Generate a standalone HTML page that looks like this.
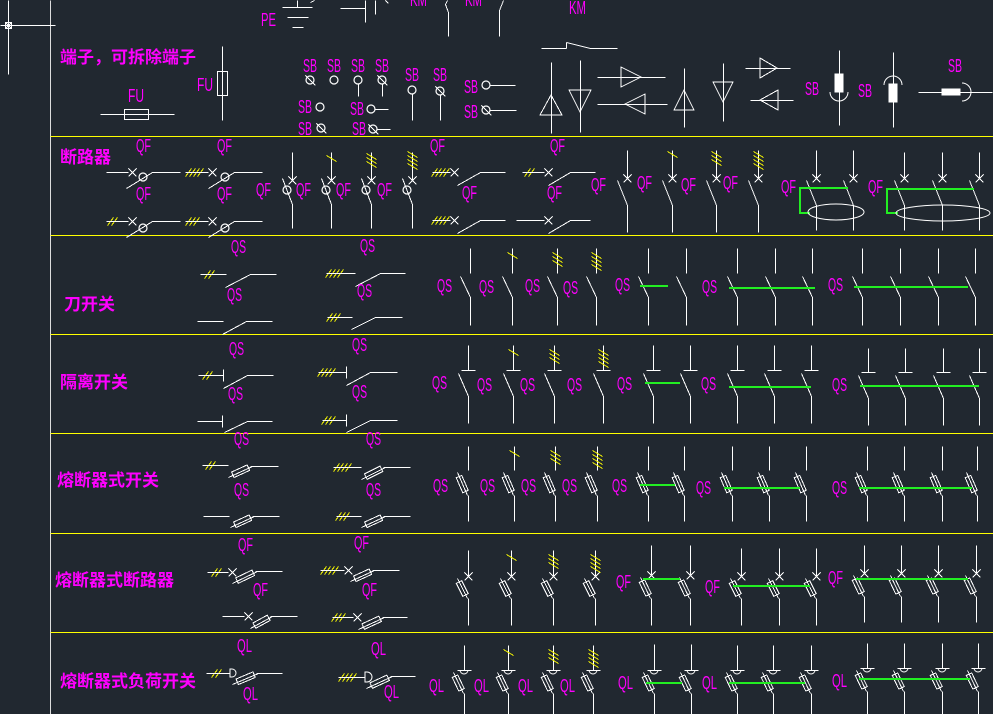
<!DOCTYPE html>
<html><head><meta charset="utf-8">
<style>
html,body{margin:0;padding:0;background:#212830;}
svg{display:block}
.m{fill:#ff00ff;font-family:"Liberation Sans Narrow","Liberation Sans",sans-serif;font-size:18px;}
.c{fill:#ff00ff;font-family:"Liberation Sans","Noto Sans CJK SC",sans-serif;font-size:17px;font-weight:bold;}
</style></head>
<body>
<svg id="s" width="993" height="714" viewBox="0 0 993 714" xmlns="http://www.w3.org/2000/svg">
<rect width="993" height="714" fill="#212830"/>
<g id="g" stroke="#fff" stroke-width="1" fill="none" shape-rendering="crispEdges"></g>
<g>
<text class="c" x="60" y="63">端子，可拆除端子</text>
<text class="c" x="60" y="163">断路器</text>
<text class="c" x="64" y="310">刀开关</text>
<text class="c" x="60" y="388">隔离开关</text>
<text class="c" x="57" y="486">熔断器式开关</text>
<text class="c" x="55" y="586">熔断器式断路器</text>
<text class="c" x="60" y="687">熔断器式负荷开关</text>

<text class="m" x="261" y="26" textLength="15" lengthAdjust="spacingAndGlyphs">PE</text>
<text class="m" x="410" y="6" textLength="17" lengthAdjust="spacingAndGlyphs">KM</text>
<text class="m" x="465" y="6" textLength="17" lengthAdjust="spacingAndGlyphs">KM</text>
<text class="m" x="569" y="14" textLength="17" lengthAdjust="spacingAndGlyphs">KM</text>
<text class="m" x="128" y="102" textLength="16" lengthAdjust="spacingAndGlyphs">FU</text>
<text class="m" x="197" y="91" textLength="16" lengthAdjust="spacingAndGlyphs">FU</text>

<text class="m" x="303" y="72" textLength="14" lengthAdjust="spacingAndGlyphs">SB</text>
<text class="m" x="327" y="72" textLength="14" lengthAdjust="spacingAndGlyphs">SB</text>
<text class="m" x="351" y="72" textLength="14" lengthAdjust="spacingAndGlyphs">SB</text>
<text class="m" x="375" y="72" textLength="14" lengthAdjust="spacingAndGlyphs">SB</text>
<text class="m" x="405" y="81" textLength="14" lengthAdjust="spacingAndGlyphs">SB</text>
<text class="m" x="433" y="81" textLength="14" lengthAdjust="spacingAndGlyphs">SB</text>
<text class="m" x="298" y="113" textLength="14" lengthAdjust="spacingAndGlyphs">SB</text>
<text class="m" x="350" y="115" textLength="14" lengthAdjust="spacingAndGlyphs">SB</text>
<text class="m" x="298" y="135" textLength="14" lengthAdjust="spacingAndGlyphs">SB</text>
<text class="m" x="352" y="135" textLength="14" lengthAdjust="spacingAndGlyphs">SB</text>
<text class="m" x="464" y="93" textLength="14" lengthAdjust="spacingAndGlyphs">SB</text>
<text class="m" x="464" y="118" textLength="14" lengthAdjust="spacingAndGlyphs">SB</text>
<text class="m" x="805" y="95" textLength="14" lengthAdjust="spacingAndGlyphs">SB</text>
<text class="m" x="858" y="97" textLength="14" lengthAdjust="spacingAndGlyphs">SB</text>
<text class="m" x="948" y="72" textLength="14" lengthAdjust="spacingAndGlyphs">SB</text>

<text class="m" x="136" y="152" textLength="15" lengthAdjust="spacingAndGlyphs">QF</text>
<text class="m" x="136" y="200" textLength="15" lengthAdjust="spacingAndGlyphs">QF</text>
<text class="m" x="217" y="152" textLength="15" lengthAdjust="spacingAndGlyphs">QF</text>
<text class="m" x="217" y="200" textLength="15" lengthAdjust="spacingAndGlyphs">QF</text>
<text class="m" x="256" y="196" textLength="15" lengthAdjust="spacingAndGlyphs">QF</text>
<text class="m" x="296" y="196" textLength="15" lengthAdjust="spacingAndGlyphs">QF</text>
<text class="m" x="336" y="196" textLength="15" lengthAdjust="spacingAndGlyphs">QF</text>
<text class="m" x="377" y="196" textLength="15" lengthAdjust="spacingAndGlyphs">QF</text>
<text class="m" x="430" y="152" textLength="15" lengthAdjust="spacingAndGlyphs">QF</text>
<text class="m" x="462" y="199" textLength="15" lengthAdjust="spacingAndGlyphs">QF</text>
<text class="m" x="550" y="152" textLength="15" lengthAdjust="spacingAndGlyphs">QF</text>
<text class="m" x="547" y="199" textLength="15" lengthAdjust="spacingAndGlyphs">QF</text>
<text class="m" x="591" y="191" textLength="15" lengthAdjust="spacingAndGlyphs">QF</text>
<text class="m" x="637" y="189" textLength="15" lengthAdjust="spacingAndGlyphs">QF</text>
<text class="m" x="681" y="191" textLength="15" lengthAdjust="spacingAndGlyphs">QF</text>
<text class="m" x="723" y="189" textLength="15" lengthAdjust="spacingAndGlyphs">QF</text>
<text class="m" x="781" y="193" textLength="15" lengthAdjust="spacingAndGlyphs">QF</text>
<text class="m" x="868" y="193" textLength="15" lengthAdjust="spacingAndGlyphs">QF</text>

<text class="m" x="231" y="253" textLength="15" lengthAdjust="spacingAndGlyphs">QS</text>
<text class="m" x="227" y="301" textLength="15" lengthAdjust="spacingAndGlyphs">QS</text>
<text class="m" x="360" y="252" textLength="15" lengthAdjust="spacingAndGlyphs">QS</text>
<text class="m" x="357" y="297" textLength="15" lengthAdjust="spacingAndGlyphs">QS</text>
<text class="m" x="437" y="292" textLength="15" lengthAdjust="spacingAndGlyphs">QS</text>
<text class="m" x="479" y="293" textLength="15" lengthAdjust="spacingAndGlyphs">QS</text>
<text class="m" x="525" y="292" textLength="15" lengthAdjust="spacingAndGlyphs">QS</text>
<text class="m" x="563" y="294" textLength="15" lengthAdjust="spacingAndGlyphs">QS</text>
<text class="m" x="615" y="291" textLength="15" lengthAdjust="spacingAndGlyphs">QS</text>
<text class="m" x="702" y="293" textLength="15" lengthAdjust="spacingAndGlyphs">QS</text>
<text class="m" x="828" y="291" textLength="15" lengthAdjust="spacingAndGlyphs">QS</text>

<text class="m" x="229" y="355" textLength="15" lengthAdjust="spacingAndGlyphs">QS</text>
<text class="m" x="228" y="400" textLength="15" lengthAdjust="spacingAndGlyphs">QS</text>
<text class="m" x="352" y="351" textLength="15" lengthAdjust="spacingAndGlyphs">QS</text>
<text class="m" x="352" y="398" textLength="15" lengthAdjust="spacingAndGlyphs">QS</text>
<text class="m" x="432" y="389" textLength="15" lengthAdjust="spacingAndGlyphs">QS</text>
<text class="m" x="477" y="391" textLength="15" lengthAdjust="spacingAndGlyphs">QS</text>
<text class="m" x="520" y="391" textLength="15" lengthAdjust="spacingAndGlyphs">QS</text>
<text class="m" x="567" y="391" textLength="15" lengthAdjust="spacingAndGlyphs">QS</text>
<text class="m" x="617" y="390" textLength="15" lengthAdjust="spacingAndGlyphs">QS</text>
<text class="m" x="701" y="390" textLength="15" lengthAdjust="spacingAndGlyphs">QS</text>
<text class="m" x="832" y="391" textLength="15" lengthAdjust="spacingAndGlyphs">QS</text>

<text class="m" x="234" y="445" textLength="15" lengthAdjust="spacingAndGlyphs">QS</text>
<text class="m" x="234" y="496" textLength="15" lengthAdjust="spacingAndGlyphs">QS</text>
<text class="m" x="366" y="445" textLength="15" lengthAdjust="spacingAndGlyphs">QS</text>
<text class="m" x="366" y="496" textLength="15" lengthAdjust="spacingAndGlyphs">QS</text>
<text class="m" x="433" y="492" textLength="15" lengthAdjust="spacingAndGlyphs">QS</text>
<text class="m" x="480" y="492" textLength="15" lengthAdjust="spacingAndGlyphs">QS</text>
<text class="m" x="521" y="492" textLength="15" lengthAdjust="spacingAndGlyphs">QS</text>
<text class="m" x="562" y="492" textLength="15" lengthAdjust="spacingAndGlyphs">QS</text>
<text class="m" x="612" y="492" textLength="15" lengthAdjust="spacingAndGlyphs">QS</text>
<text class="m" x="696" y="494" textLength="15" lengthAdjust="spacingAndGlyphs">QS</text>
<text class="m" x="832" y="494" textLength="15" lengthAdjust="spacingAndGlyphs">QS</text>

<text class="m" x="238" y="551" textLength="15" lengthAdjust="spacingAndGlyphs">QF</text>
<text class="m" x="253" y="596" textLength="15" lengthAdjust="spacingAndGlyphs">QF</text>
<text class="m" x="354" y="549" textLength="15" lengthAdjust="spacingAndGlyphs">QF</text>
<text class="m" x="362" y="596" textLength="15" lengthAdjust="spacingAndGlyphs">QF</text>
<text class="m" x="616" y="588" textLength="15" lengthAdjust="spacingAndGlyphs">QF</text>
<text class="m" x="705" y="593" textLength="15" lengthAdjust="spacingAndGlyphs">QF</text>
<text class="m" x="828" y="584" textLength="15" lengthAdjust="spacingAndGlyphs">QF</text>

<text class="m" x="237" y="652" textLength="15" lengthAdjust="spacingAndGlyphs">QL</text>
<text class="m" x="243" y="700" textLength="15" lengthAdjust="spacingAndGlyphs">QL</text>
<text class="m" x="371" y="655" textLength="15" lengthAdjust="spacingAndGlyphs">QL</text>
<text class="m" x="384" y="698" textLength="15" lengthAdjust="spacingAndGlyphs">QL</text>
<text class="m" x="429" y="692" textLength="15" lengthAdjust="spacingAndGlyphs">QL</text>
<text class="m" x="474" y="692" textLength="15" lengthAdjust="spacingAndGlyphs">QL</text>
<text class="m" x="518" y="692" textLength="15" lengthAdjust="spacingAndGlyphs">QL</text>
<text class="m" x="560" y="692" textLength="15" lengthAdjust="spacingAndGlyphs">QL</text>
<text class="m" x="618" y="689" textLength="15" lengthAdjust="spacingAndGlyphs">QL</text>
<text class="m" x="702" y="689" textLength="15" lengthAdjust="spacingAndGlyphs">QL</text>
<text class="m" x="832" y="687" textLength="15" lengthAdjust="spacingAndGlyphs">QL</text>
</g>
</svg>
<script>
var G=document.getElementById('g'),NS='http://www.w3.org/2000/svg';
function el(t,a){var e=document.createElementNS(NS,t);for(var k in a)e.setAttribute(k,a[k]);G.appendChild(e);return e;}
var W='#ffffff',Y='#ffff00',GR='#22ee22';
function L(x1,y1,x2,y2,c,w){el('line',{x1:x1+0.5,y1:y1+0.5,x2:x2+0.5,y2:y2+0.5,stroke:c||W,'stroke-width':w||1});}
function GL(x1,y,x2){el('rect',{x:x1,y:y,width:x2-x1,height:2,fill:GR,stroke:'none'});}
function C(x,y,r,slash){el('circle',{cx:x,cy:y,r:r,'shape-rendering':'auto','stroke-width':1.2});if(slash)L(x-r-1,y-r-1,x+r+1,y+r+1);}
function X(x,y){L(x-4,y-4,x+4,y+4);L(x-4,y+4,x+4,y-4);}
function vmarks(c,y,n){for(var i=0;i<n;i++){var yy=y+i*4;L(c-5,yy-3,c+5,yy+3,Y);}}
function hmarks(x,y,n){for(var i=0;i<n;i++){var xx=x+i*4;L(xx-3,y+4,xx+3,y-4,Y);}}
function fuse(x1,y1,x2,y2){L(x1,y1,x2,y2);var dx=x2-x1,dy=y2-y1,l=Math.sqrt(dx*dx+dy*dy),ux=dx/l,uy=dy/l,px=-uy*3,py=ux*3;
 var a=0.2,b=0.85,ax=x1+dx*a,ay=y1+dy*a,bx=x1+dx*b,by=y1+dy*b;
 el('polygon',{points:[ax+px,ay+py,bx+px,by+py,bx-px,by-py,ax-px,ay-py].join(' ')});}
// frame
L(50,0,50,714,'#dddddd',1);
[136,235,334,433,533,632].forEach(function(y){L(50,y,993,y,Y,1);});
L(0,25,55,25,W,1);L(8,0,8,74,W,1);el('rect',{x:5.5,y:22.5,width:6,height:6,'stroke-width':1});L(5,22,11,28,W,1);L(5,28,11,22,W,1);
// row0 top partial
L(297,0,297,7);L(282,7,312,7);L(287,17,308,17);L(292,27,303,27);
L(314,0,310,2);
L(340,8,365,8);L(365,0,365,22);L(375,0,375,14);
L(385,0,388,3);
L(447,0,445,4);L(445,4,448,12);L(448,12,448,36);
L(503,0,499,10);L(499,10,499,36);
L(541,48,566,48);L(566,42,566,48);L(566,42,590,48);L(590,48,617,48);
// FU
L(100,114,174,114);el('rect',{x:124.5,y:109.5,width:24,height:10});
L(222,46,222,120);el('rect',{x:217.5,y:71.5,width:10,height:24});
// SB stuff
C(310,80,4,1);C(334,80,4);C(358,80,4);C(382,80,4,1);L(358,84,358,96);L(382,84,382,96);
C(412,90,4);L(412,94,412,120);C(440,91,4,1);L(440,95,440,120);
C(320,107,4);C(371,109,4);L(375,109,388,109);C(321,128,4,1);C(373,129,4,1);L(377,129,390,129);
C(486,85,4);L(490,85,515,85);C(486,110,4,1);L(490,110,516,110);
// diodes
L(551,62,551,133);el('polygon',{points:'551,95 540,115 562,115'});
L(580,60,580,132);el('polygon',{points:'569,90 591,90 580,112'});
L(597,77,665,77);el('polygon',{points:'621,67 621,87 641,77'});
L(597,104,667,104);el('polygon',{points:'645,94 645,114 625,104'});
L(684,68,684,127);el('polygon',{points:'684,90 674,110 694,110'});
L(723,63,723,121);el('polygon',{points:'713,82 733,82 723,102'});
L(745,68,790,68);el('polygon',{points:'760,58 760,78 777,68'});
L(750,100,793,100);el('polygon',{points:'778,90 778,110 760,100'});
// SB buttons
L(839,50,839,125);el('rect',{x:835,y:74,width:8,height:18,fill:W});el('path',{d:'M830 92 A9 9 0 0 0 848 92','shape-rendering':'auto'});
L(893,52,893,127);el('rect',{x:889,y:84,width:8,height:18,fill:W});el('path',{d:'M884 85 A9 9 0 0 1 902 85','shape-rendering':'auto'});
L(918,92,992,92);el('rect',{x:942,y:89,width:18,height:6,fill:W});el('path',{d:'M962 83 A9 9 0 0 1 962 101','shape-rendering':'auto'});
// breakers left
L(106,172,128,172);X(132,172);L(126,188,152,172);C(143,177,4);L(152,172,180,172);
hmarks(188,172,4);L(185,172,208,172);X(212,172);L(208,188,234,172);C(225,177,4);L(234,172,262,172);
hmarks(110,221,2);L(106,221,128,221);X(132,221);L(126,237,152,221);C(143,228,4);L(152,221,180,221);
hmarks(188,221,3);L(185,221,208,221);X(212,221);L(208,237,234,221);C(225,228,4);L(234,221,262,221);
[[292,0],[331,1],[371,2],[412,3]].forEach(function(a){var c=a[0];L(c,152,c,180);X(c,180);L(c-10,178,c,204);C(c-5,190,4);L(c,204,c,228);if(a[1])vmarks(c,158-(a[1]-1)*2,a[1]+(a[1]>1?1:0));});
hmarks(434,172,4);L(432,172,450,172);X(454,172);L(457,185,480,172);L(480,172,505,172);
hmarks(434,220,4);L(432,220,450,220);X(454,220);L(457,233,480,220);L(480,220,505,220);
hmarks(527,172,2);L(522,172,544,172);X(548,172);L(548,185,570,172);L(570,172,595,172);
L(516,220,544,220);X(548,220);L(548,233,570,220);L(570,220,590,220);
[[627,0],[672,1],[716,2],[758,3]].forEach(function(a){var c=a[0];L(c,150,c,178);X(c,178);L(c-10,180,c,205);L(c,205,c,232);if(a[1])vmarks(c,154,a[1]+(a[1]>1?1:0));});
[816,853].forEach(function(c){L(c,150,c,178);X(c,178);L(c-10,180,c,205);L(c,205,c,230);});
GL(799,187,848);el('rect',{x:799,y:187,width:2,height:27,fill:GR,stroke:'none'});GL(799,212,810);el('ellipse',{cx:836,cy:212,rx:28,ry:8,'shape-rendering':'auto'});
[904,942,979].forEach(function(c){L(c,152,c,178);X(c,178);L(c-10,180,c,205);L(c,205,c,230);});
GL(886,188,974);el('rect',{x:886,y:188,width:2,height:26,fill:GR,stroke:'none'});GL(886,212,898);el('ellipse',{cx:943,cy:213,rx:47,ry:8,'shape-rendering':'auto'});
// knife switch row
hmarks(207,274,2);L(200,274,226,274);L(225,287,250,274);L(250,274,276,274);
L(197,321,223,321);L(222,334,246,321);L(246,321,272,321);
hmarks(328,273,4);L(326,273,355,273);L(355,286,380,273);L(380,273,405,273);
hmarks(329,317,3);L(327,317,352,317);L(351,329,375,317);L(375,317,402,317);
function vrow(cols,marks,t,yt,yb,yc,ye,kind){cols.forEach(function(c,i){
 L(c,yt,c,yb);
 if(kind=='tick')L(c-7,yb,c+7,yb);
 if(kind=='x')X(c,yb);
 if(kind=='d'){L(c-7,yb,c+7,yb);el('path',{d:'M'+(c-4)+' '+yb+' A4 4 0 0 0 '+(c+4)+' '+yb,'shape-rendering':'auto'});}
 if(kind=='x'||kind=='d'||kind=='f')fuse(c-11,yb+2,c-1,yc);else L(c-10,yb+3,c,yc);
 L(c,yc,c,ye);
 if(marks[i])vmarks(c,yt+7,marks[i]+(marks[i]>1?1:0));});}
var mk=[0,1,2,3];
vrow([470,512,557,596],mk,0,248,273,297,325,'');
vrow([648,686],[],0,248,273,297,325,'');GL(640,285,668);
vrow([737,775,812],[],0,248,273,297,325,'');GL(729,287,815);
vrow([862,900,938,975],[],0,248,273,297,325,'');GL(854,286,968);
// isolating
hmarks(205,375,2);L(198,375,223,375);L(223,369,223,381);L(223,388,247,375);L(247,375,273,375);
L(197,421,222,421);L(222,415,222,427);L(224,432,247,421);L(247,421,272,421);
hmarks(320,372,4);L(318,372,346,372);L(346,366,346,378);L(346,385,370,372);L(370,372,397,372);
hmarks(324,420,3);L(322,420,346,420);L(346,414,346,426);L(346,432,370,420);L(370,420,397,420);
vrow([468,513,554,603],mk,0,345,370,396,423,'tick');
vrow([653,690],[],0,345,370,396,423,'tick');GL(645,382,680);
vrow([737,774,811],[],0,345,370,396,423,'tick');GL(729,386,811);
vrow([868,905,943,979],[],0,348,372,398,425,'tick');GL(860,385,979);
// fuse switch
hmarks(208,465,2);L(202,465,228,465);fuse(228,477,252,466);L(250,466,278,466);
L(203,516,229,516);fuse(230,527,254,516);L(252,516,279,516);
hmarks(336,467,4);L(333,467,361,467);fuse(361,479,385,467);L(383,467,410,467);
hmarks(338,516,3);L(336,516,361,516);fuse(361,527,385,516);L(383,516,410,516);
vrow([468,514,555,597],mk,0,446,470,495,521,'f');
vrow([648,684],[],0,446,470,495,521,'f');GL(640,484,675);
vrow([732,769,806],[],0,446,470,495,521,'f');GL(724,487,800);
vrow([867,904,942,977],[],0,446,470,495,521,'f');GL(859,487,972);
// fuse breaker
hmarks(214,572,2);L(207,572,228,572);X(232,572);fuse(232,583,257,571);L(255,571,282,571);
L(222,616,244,616);X(248,616);fuse(250,628,272,616);L(270,616,297,616);
hmarks(323,570,4);L(320,570,344,570);X(348,570);fuse(350,581,374,570);L(372,570,399,570);
hmarks(334,617,3);L(332,617,353,617);X(357,617);fuse(358,629,384,617);L(382,617,407,617);
vrow([468,511,553,595],mk,0,550,576,598,625,'x');
vrow([651,690],[],0,545,575,598,625,'x');GL(643,578,680);
vrow([741,779,816],[],0,548,576,598,625,'x');GL(733,585,810);
vrow([864,901,938,976],[],0,545,573,596,622,'x');GL(856,578,968);
// load switch
hmarks(214,673,2);L(206,673,230,673);el('path',{d:'M230 669 L232 669 A4 4 0 0 1 232 677 L230 677 Z','shape-rendering':'auto'});fuse(232,684,258,673);L(256,673,282,673);
hmarks(341,677,4);L(338,677,365,677);el('path',{d:'M365 672 L367 672 A5 5 0 0 1 367 682 L365 682 Z','shape-rendering':'auto'});fuse(366,688,392,676);L(390,676,415,676);
vrow([464,508,553,593],mk,0,645,670,693,714,'d');
vrow([654,691],[],0,644,670,693,714,'d');GL(646,682,682);
vrow([737,773,811],[],0,645,670,693,714,'d');GL(729,682,805);
vrow([867,904,942,978],[],0,643,668,691,714,'d');GL(859,678,970);
</script>
</body></html>
